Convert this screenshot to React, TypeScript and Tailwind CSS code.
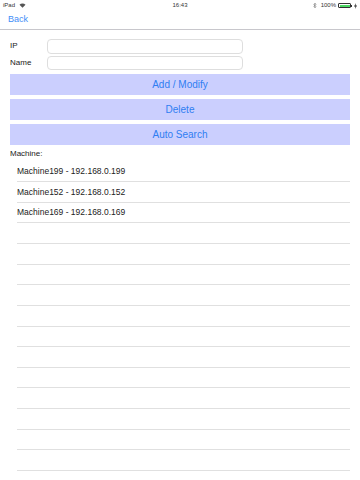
const machines = [
  'Machine199 - 192.168.0.199',
  'Machine152 - 192.168.0.152',
  'Machine169 - 192.168.0.169',
];

function StatusBar() {
  return (
    <div className="relative flex h-[11px] items-center justify-between px-[3px] text-[6px] font-medium text-[#333]">
      <div className="flex items-center gap-[4px]">
        <span>iPad</span>
        <svg width="7" height="5" viewBox="0 0 14 10">
          <path d="M7 9.5 L1 3.5 A8.5 8.5 0 0 1 13 3.5 Z" fill="#555" />
        </svg>
      </div>
      <span className="absolute left-1/2 -translate-x-1/2">16:43</span>
      <div className="flex items-center gap-[2px]">
        <svg width="4" height="7" viewBox="0 0 8 14">
          <path d="M1 4 L6 9.5 L3.5 12 V2 L6 4.5 L1 10" fill="none" stroke="#777" strokeWidth="1.2" />
        </svg>
        <span className="ml-[2px]">100%</span>
        <div className="flex items-center">
          <div className="h-[5px] w-[13px] rounded-[1px] border border-[#333] p-[0.5px]">
            <div className="h-full w-full bg-[#4cd964]" />
          </div>
          <div className="h-[2px] w-[1px] bg-[#333]" />
        </div>
        <svg width="3" height="6" viewBox="0 0 6 12">
          <path d="M4 0 L0 7 H3 L2 12 L6 5 H3 Z" fill="#222" />
        </svg>
      </div>
    </div>
  );
}

export default function App() {
  return (
    <div
      className="h-[480px] w-[360px] overflow-hidden bg-white"
      style={{ fontFamily: '"Liberation Sans", Arial, sans-serif' }}
    >
      <StatusBar />
      <div className="flex h-[19px] items-center border-b border-[#c8c7cc] px-[8px]">
        <span className="text-[9px] text-[#3f8ef7]">Back</span>
      </div>

      <div className="flex flex-col px-[10px] pt-[8.5px]">
        <div className="flex h-[15px] items-center">
          <span className="w-[37px] text-[8px] text-[#222]">IP</span>
          <div className="h-[15px] w-[196px] rounded-[4px] border border-[#dedede]" />
        </div>
        <div className="mt-[2px] flex h-[14px] items-center">
          <span className="w-[37px] text-[8px] text-[#222]">Name</span>
          <div className="h-[14px] w-[196px] rounded-[4px] border border-[#dedede]" />
        </div>

        <div className="mt-[4px] flex flex-col gap-[4px]">
          {['Add / Modify', 'Delete', 'Auto Search'].map((label) => (
            <div
              key={label}
              className="flex h-[21px] items-center justify-center bg-[#cbcffe] text-[10px] text-[#2f7ef2]"
            >
              {label}
            </div>
          ))}
        </div>

        <div className="mt-[4px] h-[10px] text-[8px] leading-[10px] text-[#222]">Machine:</div>
      </div>

      <div className="mt-[3px] flex flex-col pl-[16.5px] pr-[10px]">
        {Array.from({ length: 15 }).map((_, i) => (
          <div
            key={i}
            className="flex h-[20.63px] shrink-0 items-center border-b border-[#e0e0e0] pl-[0.5px] text-[8.5px] text-[#222]"
          >
            {machines[i] ?? ''}
          </div>
        ))}
      </div>
    </div>
  );
}
